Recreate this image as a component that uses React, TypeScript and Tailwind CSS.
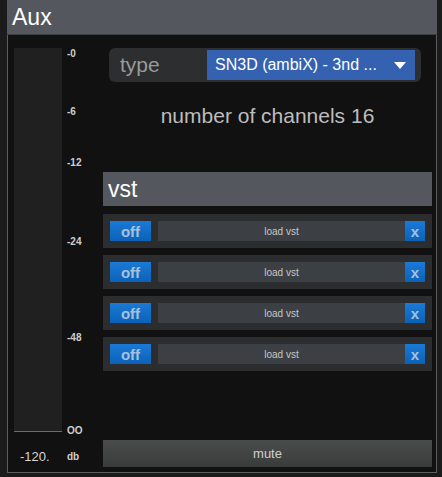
import React from 'react';

const ticks = [
  { label: '-0', top: 4 },
  { label: '-6', top: 62 },
  { label: '-12', top: 113 },
  { label: '-24', top: 192 },
  { label: '-48', top: 288 },
  { label: 'OO', top: 381 },
];

const VstRow = () => (
  <div className="h-[34px] bg-[#2c2d2e] flex items-center pl-[7px] pr-[7px]">
    <button className="w-[41px] h-[20px] bg-gradient-to-b from-[#1a7ad6] to-[#0b62b8] text-[#a9c0dc] text-[15px] font-bold leading-none">
      off
    </button>
    <div className="ml-[7px] flex-1 h-[20px] bg-[#3c3f43] flex items-center justify-center text-[10px] text-[#c8c8c8]">
      load vst
    </div>
    <button className="w-[20px] h-[20px] bg-gradient-to-b from-[#1a7ad6] to-[#0b62b8] text-[#a9c0dc] text-[15px] font-bold leading-none">
      x
    </button>
  </div>
);

const App = () => {
  return (
    <div
      className="w-[442px] h-[477px] bg-[#1b1b1b] pl-[7px] overflow-hidden"
      style={{ fontFamily: '"Liberation Sans", Arial, sans-serif' }}
    >
      <div className="w-[430px] h-[473px] flex flex-col">
        <div className="h-[35px] bg-[#54575d] flex items-center pl-[5px] border-b border-[#3d3f43]">
          <span className="text-white text-[23px] leading-none">Aux</span>
        </div>
        <div className="flex-1 bg-[#111111] border-l border-r border-b border-[#5d5e61] flex">
          <div className="w-[95px] pl-[6px] pt-[13px] flex flex-col">
            <div className="flex">
              <div className="w-[48px] h-[384px] bg-[#1f201f] flex flex-col justify-end">
                <div className="h-[1px] bg-[#3a6fd8]" />
              </div>
              <div className="relative w-[30px] h-[384px] ml-[5px]">
                {ticks.map((t) => (
                  <span
                    key={t.label}
                    className="absolute left-0 text-[10px] font-bold text-[#cfcfcf] leading-none"
                    style={{ top: t.top - 3 }}
                  >
                    {t.label}
                  </span>
                ))}
              </div>
            </div>
            <div className="flex items-center mt-[15px]">
              <span className="w-[53px] pl-[6px] text-[13px] text-[#d6d6d6]">-120.</span>
              <span className="text-[10px] font-bold text-[#cfcfcf]">db</span>
            </div>
          </div>
          <div className="w-[329px] pt-[13px] flex flex-col">
            <div className="ml-[6px] w-[312px] h-[34px] rounded-[6px] bg-[#2d2e2f] flex items-center">
              <span className="w-[98px] pl-[11px] text-[21px] text-[#9a9a9a]">type</span>
              <div className="w-[208px] h-[30px] bg-[#3562b0] flex items-center justify-between pl-[8px] pr-[9px]">
                <span className="text-[16px] text-white leading-none">SN3D (ambiX) - 3nd ...</span>
                <svg width="12" height="7" viewBox="0 0 12 7">
                  <path d="M0 0 L12 0 L6 7 Z" fill="#ffffff" />
                </svg>
              </div>
            </div>
            <div className="h-[90px] flex justify-center pt-[20px]">
              <span className="text-[21px] leading-[28px] text-[#bdbdbd]">number of channels 16</span>
            </div>
            <div className="h-[34px] bg-[#54575d] flex items-center pl-[5px]">
              <span className="text-white text-[23px] leading-none">vst</span>
            </div>
            <div className="mt-[8px] flex flex-col gap-[7px]">
              <VstRow />
              <VstRow />
              <VstRow />
              <VstRow />
            </div>
            <div className="flex-1" />
            <button className="h-[27px] mb-[5px] bg-gradient-to-b from-[#4b4c4c] to-[#3a3b3b] text-[13px] text-[#cfcfcf]">
              mute
            </button>
          </div>
        </div>
      </div>
    </div>
  );
};

export default App;
